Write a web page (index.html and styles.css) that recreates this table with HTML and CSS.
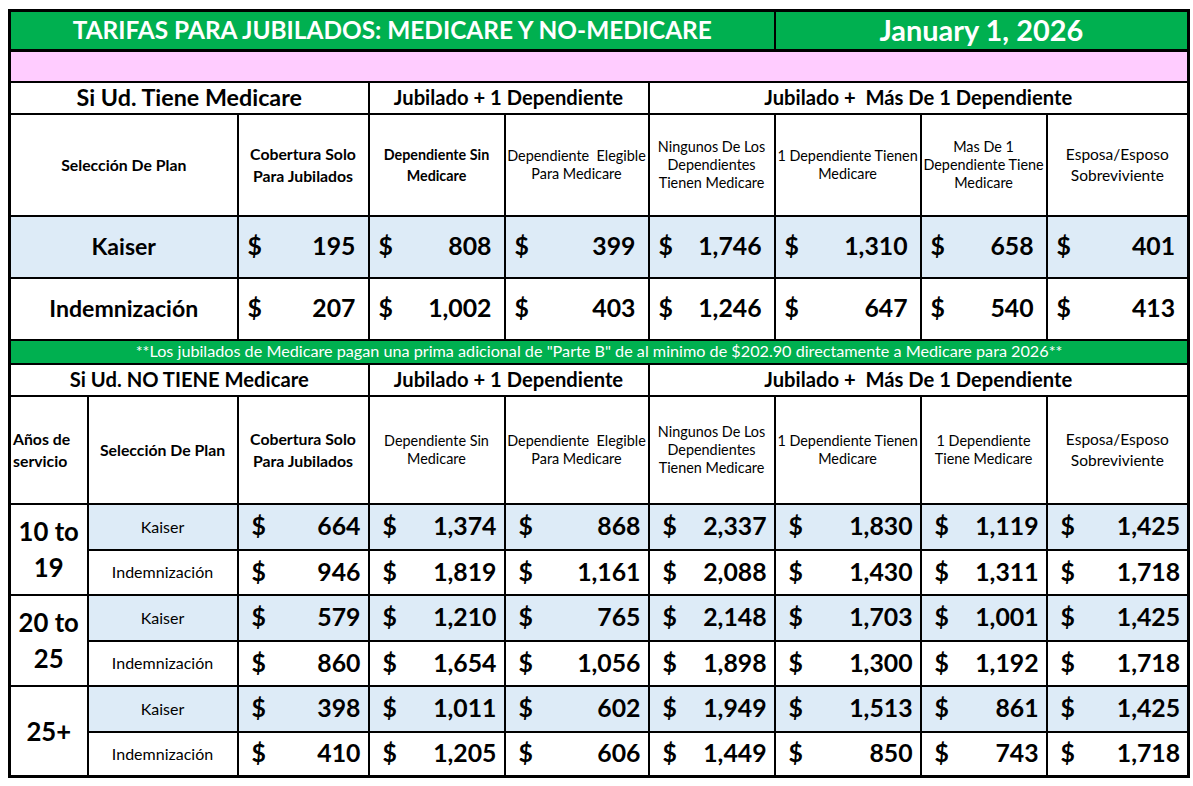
FILE: index.html
```html
<!DOCTYPE html>
<html lang="es">
<head>
<meta charset="utf-8">
<title>Tarifas para jubilados</title>
<link rel="stylesheet" href="styles.css">
</head>
<body>
<table class="rates">
  <colgroup>
    <col class="c-a"><col class="c-b"><col class="c-c"><col class="c-d"><col class="c-e"><col class="c-f"><col class="c-g"><col class="c-h"><col class="c-i">
  </colgroup>
  <tbody>
    <tr class="r-title">
      <td colspan="6" class="title">TARIFAS PARA JUBILADOS: MEDICARE Y NO-MEDICARE</td>
      <td colspan="3" class="title date">January 1, 2026</td>
    </tr>
    <tr class="r-pink"><td colspan="9" class="pink"></td></tr>
    <tr class="r-sec">
      <td colspan="3" class="sec big">Si Ud. Tiene Medicare</td>
      <td colspan="2" class="sec">Jubilado + 1 Dependiente</td>
      <td colspan="4" class="sec">Jubilado +&nbsp; Más De 1 Dependiente</td>
    </tr>
    <tr class="r-hdr1">
      <td colspan="2" class="hd b">Selección De Plan</td>
      <td class="hd b">Cobertura Solo<br>Para Jubilados</td>
      <td class="hd bs">Dependiente Sin<br>Medicare</td>
      <td class="hd">Dependiente&nbsp; Elegible<br>Para Medicare</td>
      <td class="hd">Ningunos De Los<br>Dependientes<br>Tienen Medicare</td>
      <td class="hd">1 Dependiente Tienen<br>Medicare</td>
      <td class="hd">Mas De 1<br>Dependiente Tiene<br>Medicare</td>
      <td class="hd lg">Esposa/Esposo<br>Sobreviviente</td>
    </tr>
    <tr class="r-top blue">
      <td colspan="2" class="plan">Kaiser</td>
      <td class="amt"><span>$</span><span>195</span></td>
      <td class="amt"><span>$</span><span>808</span></td>
      <td class="amt"><span>$</span><span>399</span></td>
      <td class="amt"><span>$</span><span>1,746</span></td>
      <td class="amt"><span>$</span><span>1,310</span></td>
      <td class="amt"><span>$</span><span>658</span></td>
      <td class="amt"><span>$</span><span>401</span></td>
    </tr>
    <tr class="r-top">
      <td colspan="2" class="plan">Indemnización</td>
      <td class="amt"><span>$</span><span>207</span></td>
      <td class="amt"><span>$</span><span>1,002</span></td>
      <td class="amt"><span>$</span><span>403</span></td>
      <td class="amt"><span>$</span><span>1,246</span></td>
      <td class="amt"><span>$</span><span>647</span></td>
      <td class="amt"><span>$</span><span>540</span></td>
      <td class="amt"><span>$</span><span>413</span></td>
    </tr>
    <tr class="r-note">
      <td colspan="9" class="note">**Los jubilados de Medicare pagan una prima adicional de "Parte B" de al minimo de $202.90 directamente a Medicare para 2026**</td>
    </tr>
    <tr class="r-sec">
      <td colspan="3" class="sec">Si Ud. NO TIENE Medicare</td>
      <td colspan="2" class="sec">Jubilado + 1 Dependiente</td>
      <td colspan="4" class="sec">Jubilado +&nbsp; Más De 1 Dependiente</td>
    </tr>
    <tr class="r-hdr2">
      <td class="hd b years">Años de<br>servicio</td>
      <td class="hd b">Selección De Plan</td>
      <td class="hd b">Cobertura Solo<br>Para Jubilados</td>
      <td class="hd">Dependiente Sin<br>Medicare</td>
      <td class="hd">Dependiente&nbsp; Elegible<br>Para Medicare</td>
      <td class="hd">Ningunos De Los<br>Dependientes<br>Tienen Medicare</td>
      <td class="hd">1 Dependiente Tienen<br>Medicare</td>
      <td class="hd">1 Dependiente<br>Tiene Medicare</td>
      <td class="hd lg">Esposa/Esposo<br>Sobreviviente</td>
    </tr>
    <tr class="r-d1 blue">
      <td rowspan="2" class="yrs">10 to<br>19</td>
      <td class="plan2">Kaiser</td>
      <td class="amt2"><span>$</span><span>664</span></td>
      <td class="amt2"><span>$</span><span>1,374</span></td>
      <td class="amt2"><span>$</span><span>868</span></td>
      <td class="amt2"><span>$</span><span>2,337</span></td>
      <td class="amt2"><span>$</span><span>1,830</span></td>
      <td class="amt2"><span>$</span><span>1,119</span></td>
      <td class="amt2"><span>$</span><span>1,425</span></td>
    </tr>
    <tr class="r-d2">
      <td class="plan2">Indemnización</td>
      <td class="amt2"><span>$</span><span>946</span></td>
      <td class="amt2"><span>$</span><span>1,819</span></td>
      <td class="amt2"><span>$</span><span>1,161</span></td>
      <td class="amt2"><span>$</span><span>2,088</span></td>
      <td class="amt2"><span>$</span><span>1,430</span></td>
      <td class="amt2"><span>$</span><span>1,311</span></td>
      <td class="amt2"><span>$</span><span>1,718</span></td>
    </tr>
    <tr class="r-d1 blue">
      <td rowspan="2" class="yrs">20 to<br>25</td>
      <td class="plan2">Kaiser</td>
      <td class="amt2"><span>$</span><span>579</span></td>
      <td class="amt2"><span>$</span><span>1,210</span></td>
      <td class="amt2"><span>$</span><span>765</span></td>
      <td class="amt2"><span>$</span><span>2,148</span></td>
      <td class="amt2"><span>$</span><span>1,703</span></td>
      <td class="amt2"><span>$</span><span>1,001</span></td>
      <td class="amt2"><span>$</span><span>1,425</span></td>
    </tr>
    <tr class="r-d2">
      <td class="plan2">Indemnización</td>
      <td class="amt2"><span>$</span><span>860</span></td>
      <td class="amt2"><span>$</span><span>1,654</span></td>
      <td class="amt2"><span>$</span><span>1,056</span></td>
      <td class="amt2"><span>$</span><span>1,898</span></td>
      <td class="amt2"><span>$</span><span>1,300</span></td>
      <td class="amt2"><span>$</span><span>1,192</span></td>
      <td class="amt2"><span>$</span><span>1,718</span></td>
    </tr>
    <tr class="r-d1 blue">
      <td rowspan="2" class="yrs">25+</td>
      <td class="plan2">Kaiser</td>
      <td class="amt2"><span>$</span><span>398</span></td>
      <td class="amt2"><span>$</span><span>1,011</span></td>
      <td class="amt2"><span>$</span><span>602</span></td>
      <td class="amt2"><span>$</span><span>1,949</span></td>
      <td class="amt2"><span>$</span><span>1,513</span></td>
      <td class="amt2"><span>$</span><span>861</span></td>
      <td class="amt2"><span>$</span><span>1,425</span></td>
    </tr>
    <tr class="r-d2">
      <td class="plan2">Indemnización</td>
      <td class="amt2"><span>$</span><span>410</span></td>
      <td class="amt2"><span>$</span><span>1,205</span></td>
      <td class="amt2"><span>$</span><span>606</span></td>
      <td class="amt2"><span>$</span><span>1,449</span></td>
      <td class="amt2"><span>$</span><span>850</span></td>
      <td class="amt2"><span>$</span><span>743</span></td>
      <td class="amt2"><span>$</span><span>1,718</span></td>
    </tr>
  </tbody>
</table>
</body>
</html>
```
FILE: styles.css
```css
html, body {
  margin: 0;
  padding: 0;
  background: #ffffff;
}

body {
  font-family: "Lato", "Liberation Sans", sans-serif;
  color: #000000;
}

.rates {
  margin: 9px 0 0 8px;
  border-collapse: collapse;
  table-layout: fixed;
  width: 1179px;
  border: 3px solid #000;
}

.c-a { width: 78px; }
.c-b { width: 150px; }
.c-c { width: 131px; }
.c-d { width: 136px; }
.c-e { width: 144px; }
.c-f { width: 126px; }
.c-g { width: 146px; }
.c-h { width: 126px; }
.c-i { width: 142px; }

.rates td {
  border: 2px solid #000;
  padding: 0;
  text-align: center;
  vertical-align: middle;
  line-height: 1.25;
  white-space: nowrap;
}

/* row heights */
.r-title { height: 40px; }
.r-pink { height: 31px; }
.r-sec { height: 32px; }
.r-hdr1 { height: 102px; }
.r-top { height: 62px; }
.r-note { height: 24px; }
.r-hdr2 { height: 108px; }
.r-d1 { height: 46px; }
.r-d2 { height: 45px; }

.rates .title {
  background: #00b050;
  color: #ffffff;
  font-weight: 700;
  font-size: 24.4px;
  line-height: 1;
  border-bottom-width: 3px;
}

.rates .title.date {
  font-size: 28.9px;
}

.rates .pink {
  background: #ffccff;
}

.sec {
  font-weight: 700;
  font-size: 20.2px;
  line-height: 1;
}

.sec.big {
  font-size: 23.3px;
}

.hd {
  font-size: 14.4px;
  line-height: 20.5px;
}

.hd.b {
  font-weight: 700;
  font-size: 15.8px;
  line-height: 22px;
}

.hd.bs {
  font-weight: 700;
  font-size: 14.3px;
  line-height: 21px;
}

.hd.lg {
  font-size: 15.5px;
  line-height: 21px;
}

.rates .years {
  text-align: left;
  padding-left: 2px;
}

.blue td.plan,
.blue td.plan2,
.blue td.amt,
.blue td.amt2 {
  background: #ddebf7;
}

.plan {
  font-weight: 700;
  font-size: 23.1px;
}

.plan2 {
  font-size: 16px;
}

.amt,
.amt2 {
  font-weight: 700;
  font-size: 24.8px;
  line-height: 1.1;
}

.rates td.amt > span:first-child,
.rates td.amt2 > span:first-child {
  float: left;
}

.rates td.amt > span:last-child,
.rates td.amt2 > span:last-child {
  float: right;
}

.rates td.amt {
  padding: 0 12px 0 9px;
}

.rates td.amt2 {
  padding: 0 7px 0 13px;
}

.rates .note {
  background: #00b050;
  color: #ffffff;
  font-size: 16.2px;
  line-height: 1;
}

.rates .yrs {
  font-weight: 700;
  font-size: 25.7px;
  line-height: 36px;
}
```
